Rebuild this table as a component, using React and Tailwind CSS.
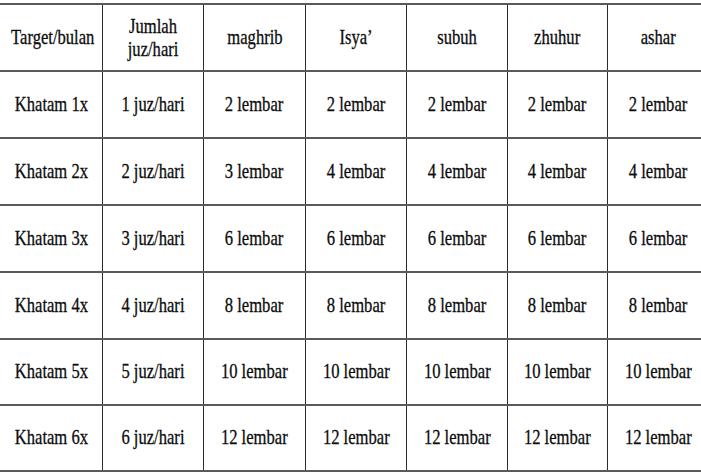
import React from "react";

const header = ["Target/bulan", "Jumlah juz/hari", "maghrib", "Isya’", "subuh", "zhuhur", "ashar"];

const rows = [
  ["Khatam 1x", "1 juz/hari", "2 lembar", "2 lembar", "2 lembar", "2 lembar", "2 lembar"],
  ["Khatam 2x", "2 juz/hari", "3 lembar", "4 lembar", "4 lembar", "4 lembar", "4 lembar"],
  ["Khatam 3x", "3 juz/hari", "6 lembar", "6 lembar", "6 lembar", "6 lembar", "6 lembar"],
  ["Khatam 4x", "4 juz/hari", "8 lembar", "8 lembar", "8 lembar", "8 lembar", "8 lembar"],
  ["Khatam 5x", "5 juz/hari", "10 lembar", "10 lembar", "10 lembar", "10 lembar", "10 lembar"],
  ["Khatam 6x", "6 juz/hari", "12 lembar", "12 lembar", "12 lembar", "12 lembar", "12 lembar"],
];

const widths = ["w-[103px]", "w-[101px]", "w-[102px]", "w-[101px]", "w-[101px]", "w-[100px]", "w-[101px]"];
const heights = ["h-[67px]", "h-[67px]", "h-[67px]", "h-[67px]", "h-[67px]", "h-[66px]", "h-[66px]"];

const Cell = ({ children, twoLine }) => (
  <td className="border-x border-x-[#2a2a2a] border-y-2 border-y-[#5a5a5a] p-0 text-center align-middle">
    <span
      className={
        "inline-block scale-x-[0.79] whitespace-nowrap font-['Liberation_Serif','Times_New_Roman',serif] text-[21px] text-[#0c0c0c] [-webkit-text-stroke:0.3px_#0c0c0c] " +
        (twoLine ? "leading-[23px] pt-[3px]" : "leading-[24px]")
      }
    >
      {children}
    </span>
  </td>
);

const App = () => {
  return (
    <div className="w-[701px] h-[475px] overflow-hidden bg-white pt-[3px] font-['Liberation_Serif','Times_New_Roman',serif]">
      <table className="ml-[-1px] table-fixed border-collapse w-[709px]">
        <colgroup>
          {widths.map((w, i) => (
            <col key={i} className={w} />
          ))}
        </colgroup>
        <tbody>
          <tr className={heights[0]}>
            {header.map((h, i) => (
              <Cell key={i} twoLine={i === 1}>
                {i === 1 ? (
                  <>
                    Jumlah
                    <br />
                    juz/hari
                  </>
                ) : (
                  h
                )}
              </Cell>
            ))}
          </tr>
          {rows.map((r, ri) => (
            <tr key={ri} className={heights[ri + 1]}>
              {r.map((c, ci) => (
                <Cell key={ci}>{c}</Cell>
              ))}
            </tr>
          ))}
        </tbody>
      </table>
    </div>
  );
};

export default App;
